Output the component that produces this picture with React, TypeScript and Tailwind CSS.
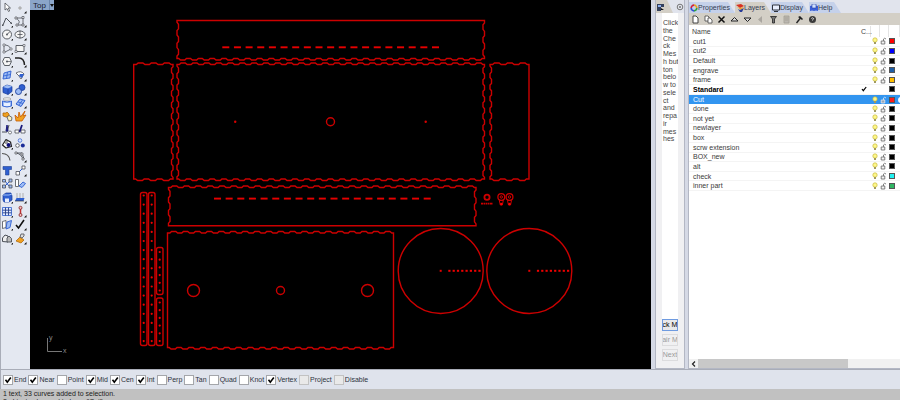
import type { ReactNode } from 'react';

type Layer = { name: string; color: string; current?: boolean; selected?: boolean };

const layers: Layer[] = [
  { name: 'cut1', color: '#ff0000' },
  { name: 'cut2', color: '#0000ff' },
  { name: 'Default', color: '#000000' },
  { name: 'engrave', color: '#1f5fa8' },
  { name: 'frame', color: '#ffbf00' },
  { name: 'Standard', color: '#000000', current: true },
  { name: 'Cut', color: '#ff1a1a', selected: true },
  { name: 'done', color: '#000000' },
  { name: 'not yet', color: '#000000' },
  { name: 'newlayer', color: '#000000' },
  { name: 'box', color: '#000000' },
  { name: 'scrw extension', color: '#000000' },
  { name: 'BOX_new', color: '#000000' },
  { name: 'alt', color: '#000000' },
  { name: 'check', color: '#21f0f0' },
  { name: 'inner part', color: '#2fb563' },
];

const snaps = [
  { label: 'End', on: true },
  { label: 'Near', on: true },
  { label: 'Point', on: false },
  { label: 'Mid', on: true },
  { label: 'Cen', on: true },
  { label: 'Int', on: true },
  { label: 'Perp', on: false },
  { label: 'Tan', on: false },
  { label: 'Quad', on: false },
  { label: 'Knot', on: false },
  { label: 'Vertex', on: true },
  { label: 'Project', on: false, muted: true },
  { label: 'Disable', on: false, muted: true },
];

const hint = ['Click', 'the', 'Che', 'ck', 'Mes', 'h but', 'ton', 'belo', 'w to', 'sele', 'ct', 'and', 'repa', 'ir', 'mes', 'hes'];

const G = '#4b4f57';
const B = '#2f5fd0';
const L = '#9dbcf5';
const O = '#f0a020';

// 13x13 glyphs, two per toolbar row
const tools: { name: string; more?: boolean; art: ReactNode }[] = [
  { name: 'Select', art: <path d="M4 2v7l2-1.500 1.500 3 1.200-.6-1.400-2.900H9.500z" fill="#fff" stroke={G} strokeWidth=".8" /> },
  { name: 'Point', more: true, art: <circle cx="6" cy="7" r="1.200" fill="#ddd" stroke="#888" strokeWidth=".7" /> },
  { name: 'Polyline', more: true, art: <><path d="M2 10 5 3l5 5" fill="none" stroke={G} /><path d="M1 9.500h1.500V11H1zM9.500 7.500H11V9H9.500z" fill={G} /></> },
  { name: 'Control point curve', more: true, art: <><path d="M2 3h7M9 3v7H3Q8 7 2 3" fill="none" stroke={G} strokeWidth=".8" /><path d="M1 2h2v2H1zM8 1.500h2v2H8zM8 9h2v2H8zM2 9h2v2H2z" fill="#fff" stroke={G} strokeWidth=".7" /></> },
  { name: 'Circle', more: true, art: <><circle cx="6" cy="6.500" r="4.500" fill="#f6f6f6" stroke={G} strokeWidth=".9" /><path d="m6 6.500 3-3" stroke={G} strokeWidth=".9" /><circle cx="6" cy="6.500" r=".9" fill={G} /></> },
  { name: 'Ellipse', more: true, art: <><ellipse cx="6" cy="6.500" rx="5" ry="3.500" fill="#f6f6f6" stroke={G} strokeWidth=".9" /><path d="M6 2.500v8M3.500 6.500h5" stroke={G} strokeWidth=".8" /></> },
  { name: 'Arc', more: true, art: <><path d="M3 2.500Q8.500 3 10 7M3 2.500v8L10 7" fill="none" stroke={G} strokeWidth=".8" /><path d="M2 2h2v2H2zM2 9h2v2H2zM9 6h2v2H9z" fill="#fff" stroke={G} strokeWidth=".6" /></> },
  { name: 'Rectangle', more: true, art: <><path d="M2 3.500h8v6H2z" fill="#f4f4f4" stroke={G} strokeWidth=".9" /><path d="M9 2.500h2v2H9zM1 8.500h2v2H1z" fill="#fff" stroke={G} strokeWidth=".6" /></> },
  { name: 'Polygon', more: true, art: <><path d="m3.500 2.500 5 0L10.500 6.500l-2 4h-5l-2-4z" fill="#f4f4f4" stroke={G} strokeWidth=".9" /><path d="M6 6.500h4" stroke={G} strokeWidth=".7" /><circle cx="6" cy="6.500" r="1" fill={G} /></> },
  { name: 'Fillet', more: true, art: <path d="M1 3h4q5 0 5.500 7" fill="none" stroke="#222" strokeWidth="1.500" /> },
  { name: 'Surface', more: true, art: <><path d="m3 4 7-2-1 7-7 1z" fill={L} stroke={B} strokeWidth=".9" /><path d="M6.500 3 5.500 9.500M2.500 7l7-1.500" stroke={B} strokeWidth=".8" /></> },
  { name: 'Sweep', more: true, art: <><path d="M2 4q5-3 8 1l-3 5-2-3z" fill="#fff" stroke={G} strokeWidth=".8" /><path d="m6 5 4 0-2 4-3-2z" fill={B} /></> },
  { name: 'Box', more: true, art: <><path d="m2 4 4-2 5 1.500v5L7 11.500 2 9.500z" fill={B} stroke="#173b9a" strokeWidth=".7" /><path d="m2 4 4-2 5 1.500L7 5.500z" fill={L} /><path d="M7 5.500v6" stroke="#173b9a" strokeWidth=".7" /></> },
  { name: 'Sphere', more: true, art: <><circle cx="8" cy="4.500" r="3" fill={B} stroke="#173b9a" strokeWidth=".8" /><circle cx="4.500" cy="8.500" r="3" fill={L} stroke="#173b9a" strokeWidth=".9" /></> },
  { name: 'Pipe', more: true, art: <><ellipse cx="6" cy="3" rx="4" ry="1.300" fill="#eee" stroke="#999" strokeWidth=".7" /><path d="M1.500 5q4.500 2 9 0v5q-4.500 2-9 0z" fill={L} stroke={B} strokeWidth=".9" /><path d="M3 7h6v3H3z" fill="#e8f0ff" /></> },
  { name: 'Plane', more: true, art: <><path d="m2 8 4-5 5 1.500-4 6z" fill={L} stroke={B} /><path d="m4 6 5 1.500M8.500 4 5 9" stroke={B} strokeWidth=".8" /></> },
  { name: 'Join', art: <><path d="M2 3h3l1-1 2 2v3H5L2 6z" fill={O} stroke="#a86000" strokeWidth=".7" /><path d="m6 7 2-1.500 3 2-.5 3L7.500 11z" fill="#fff0b8" stroke={G} strokeWidth=".8" /></> },
  { name: 'Explode', art: <path d="m2 11-1-6 3 3 1-6 1.500 5L11 1 9 6l3-1-4 6z" fill={O} stroke="#c85a00" strokeWidth=".8" /> },
  { name: 'Trim', art: <><path d="M1 9h5M8 2 6 9" stroke={G} /><path d="m6 2-1 6h2z" fill="#1a1a7a" stroke="#1a1a7a" /><circle cx="9" cy="9.500" r="1.500" fill="#fff" stroke={G} strokeWidth=".7" /></> },
  { name: 'Split', art: <><path d="M1 7h4v3H1zM7 7h4v3H7z" fill="#fff" stroke={G} strokeWidth=".8" /><path d="M8 2 5.500 9" stroke="#1a1a7a" strokeWidth="1.800" /></> },
  { name: 'Group', more: true, art: <><path d="M1.500 8 5 2.500 9.500 5l1 4.500L5 11z" fill="#fff" stroke="#222" strokeWidth="1.200" strokeLinejoin="round" /><circle cx="7.500" cy="8" r="2" fill="#10107a" /><circle cx="5" cy="5" r="1.300" fill="#fff" stroke="#222" strokeWidth=".7" /></> },
  { name: 'Ungroup', art: <><circle cx="6" cy="3.500" r="1.800" fill="#dce6ff" stroke={B} strokeWidth=".7" /><circle cx="3.500" cy="8.500" r="1.800" fill="#fff" stroke={G} strokeWidth=".8" /><circle cx="8.800" cy="8.500" r="2" fill="#1b2c98" /></> },
  { name: 'Curve edit', art: <path d="M1 3.500q7 0 8 7" fill="none" stroke="#555" strokeWidth="1.200" /> },
  { name: 'Control points', more: true, art: <><path d="M2 3q6 1 7 7M2 3l6 0 2 6" fill="none" stroke={G} strokeWidth=".9" /><path d="M1 2h2v2H1zM7 3h2v2H7zM8 8h2v2H8z" fill="#fff" stroke={G} strokeWidth=".7" /></> },
  { name: 'Text', art: <path d="M2 2.500h8.500v3h-2.500V11H4.500V5.500H2z" fill={B} stroke="#204090" strokeWidth=".6" /> },
  { name: 'Move', more: true, art: <><path d="m4 9 5-5" stroke={B} /><path d="M2 7.500h3.500V11H2zM8 2h3v3H8z" fill="#fff" stroke={G} strokeWidth=".8" /></> },
  { name: 'Array', art: <><path d="m4 4 4 5M4 9l5-5" stroke={B} /><path d="M1.500 2.500h3v2.500h-3zM8 2h3v3H8zM1.500 8h3v3h-3zM8 8h3v3H8z" fill={L} stroke={G} strokeWidth=".8" /></> },
  { name: 'Rotate', art: <><path d="M1.500 2.500h3v7h-3z" fill="#fff" stroke={G} strokeWidth=".8" /><path d="m5 9 4-4 2.500 1.500L8 10.500z" fill={L} stroke={B} strokeWidth=".9" /></> },
  { name: 'Boolean', more: true, art: <><path d="m2 4 3-2h5l1 3v4l-3 2H3L2 9z" fill={B} stroke="#173b9a" strokeWidth=".7" /><path d="M2 4h6l3-1" stroke={L} fill="none" /><path d="M4 7.500h4V11H4z" fill="#e6eeff" /></> },
  { name: 'Extrude', more: true, art: <><path d="M3 7V2M6 7V2M9 7V2" stroke="#aaa" strokeWidth=".9" /><path d="m1 10 1.500-3h8L9.500 10z" fill={B} /><path d="M1 10h9" stroke="#222" strokeWidth=".6" /></> },
  { name: 'Grid', more: true, art: <><path d="M1.500 2.500h9v8h-9z" fill="#dfe9ff" stroke={B} strokeWidth=".8" /><path d="M4.500 2.500v8M7.500 2.500v8M1.500 5.200h9M1.500 7.800h9" stroke="#27408a" strokeWidth=".9" /></> },
  { name: 'Dimension', more: true, art: <><path d="M6.500 3v7" stroke="#c03030" strokeWidth="1.500" /><circle cx="6.500" cy="2.800" r="1.500" fill="#f6c0c0" stroke="#802020" strokeWidth=".8" /><circle cx="6.500" cy="10" r="1.500" fill="#f6c0c0" stroke="#802020" strokeWidth=".8" /></> },
  { name: 'Unroll', more: true, art: <><path d="M1.500 3.500 5 2.500v7l-3.500 1z" fill="#fff" stroke={G} strokeWidth=".8" /><path d="m6 4 4.500-1.500L9 9.500 5 11z" fill={L} stroke={B} strokeWidth=".9" /></> },
  { name: 'Check', more: true, art: <path d="m2 7 2.500 3L10 2" fill="none" stroke="#111" strokeWidth="1.600" /> },
  { name: 'Mesh', more: true, art: <><path d="M1.500 9.500V6L4 3l3 1v6z" fill="#eee" stroke={G} /><path d="M6 10V6l2-2 2.500 2.500V10z" fill="#bbb" stroke={G} strokeWidth=".9" /></> },
  { name: 'Paint', more: true, art: <><path d="m6 5 4 3-3 3-5-2z" fill={O} stroke="#a86000" strokeWidth=".7" /><path d="m6 5 1-3h3v2L8 6z" fill="#ddd" stroke={G} strokeWidth=".8" /></> },
];

const TOOTH = 11.65;

// A run of shallow teeth along one edge, ending exactly on (x2, y2)
function wavy(x1: number, y1: number, x2: number, y2: number, nx: number, ny: number) {
  const length = Math.hypot(x2 - x1, y2 - y1);
  const count = Math.round(length / TOOTH);
  const ux = (x2 - x1) / count;
  const uy = (y2 - y1) / count;
  let d = '';
  for (let i = 0; i < count; i++) {
    const at = (t: number, k: number) => `L${(x1 + ux * (i + t) + nx * k).toFixed(2)} ${(y1 + uy * (i + t) + ny * k).toFixed(2)}`;
    d += at(0.2, 0) + at(0.34, 1) + at(0.7, 1) + at(0.86, 0);
  }
  return `${d}L${x2} ${y2}`;
}

type Sides = { t?: boolean; r?: boolean; b?: boolean; l?: boolean };

function panel(x1: number, y1: number, x2: number, y2: number, s: Sides) {
  const a = 1.5;
  return (
    `M${x1} ${y1}` +
    (s.t ? wavy(x1, y1, x2, y1, 0, -a) : `L${x2} ${y1}`) +
    (s.r ? wavy(x2, y1, x2, y2, -a, 0) : `L${x2} ${y2}`) +
    (s.b ? wavy(x2, y2, x1, y2, 0, a) : `L${x1} ${y2}`) +
    (s.l ? wavy(x1, y2, x1, y1, a, 0) : '') +
    'Z'
  );
}

const panels = [
  panel(177, 20.5, 484.5, 58.5, { r: true, b: true, l: true }),
  panel(177, 64.5, 484.5, 179, { t: true, r: true, b: true, l: true }),
  panel(133.7, 64.5, 173, 179, { t: true, r: true, b: true }),
  panel(490, 64.5, 529, 179, { t: true, b: true, l: true }),
  panel(168.5, 187.5, 476, 225.7, { t: true, r: true, l: true }),
  panel(167.5, 233, 393.5, 347.5, { t: true, b: true }),
];

const strips = [
  { x: 140.5, y: 192.5, h: 153, first: 195.5, step: 9.1, dots: 17 },
  { x: 148.5, y: 192.5, h: 153, first: 195.5, step: 9.1, dots: 17 },
  { x: 156.5, y: 247.5, h: 47, first: 252, step: 7.7, dots: 6 },
  { x: 156.5, y: 298, h: 47.5, first: 302.5, step: 7.7, dots: 6 },
];

const range = (n: number) => Array.from({ length: n }, (_, i) => i);

function Drawing() {
  return (
    <svg className="block" width="621" height="369" viewBox="30 0 621 369" fill="none" stroke="#cc0000" strokeWidth="1.400" role="img" aria-label="Top view">
      {panels.map((d) => (
        <path key={d} d={d} />
      ))}
      {range(19).map((i) => (
        <g key={i} stroke="#e60000" strokeWidth="1.900">
          <path d={`M${222.3 + i * TOOTH} 47.300h7`} />
          <path d={`M${214 + i * TOOTH} 198.600h7`} />
        </g>
      ))}
      <circle cx="330.500" cy="121.700" r="4" />
      <circle cx="235.200" cy="121.700" r="1.200" fill="#d80000" stroke="none" />
      <circle cx="425.700" cy="121.700" r="1.200" fill="#d80000" stroke="none" />
      <circle cx="193.500" cy="290.500" r="6" />
      <circle cx="280.500" cy="290.500" r="4" />
      <circle cx="367.500" cy="290.500" r="6" />
      {strips.map((s) => (
        <g key={`${s.x}-${s.y}`}>
          <rect x={s.x} y={s.y} width="6.500" height={s.h} rx="2" />
          {range(s.dots).map((i) => (
            <circle key={i} cx={s.x + 3.2} cy={s.first + i * s.step} r="1.100" fill="#f00000" stroke="none" />
          ))}
        </g>
      ))}
      {[440.7, 529.3].map((cx) => (
        <g key={cx}>
          <circle cx={cx} cy="271" r="42.500" />
          <path d={`M${cx - 1} 270.800h2`} stroke="#e60000" strokeWidth="2" />
          {range(8).map((i) => (
            <path key={i} d={`M${cx + 7.6 + i * 4.3} 270.800h2.200`} stroke="#f00000" strokeWidth="2" />
          ))}
        </g>
      ))}
      <circle cx="487" cy="197.300" r="2.600" strokeWidth="1.800" />
      <path d="M481 203.600h12" strokeWidth="1.600" strokeDasharray="2 .5 1.500 .5" />
      {[501.3, 509.5].map((cx) => (
        <g key={cx}>
          <circle cx={cx} cy="197" r="3.400" strokeWidth="1.300" />
          <circle cx={cx} cy="197" r="1.200" strokeWidth="1" />
          <path d={`M${cx - 2} 200.500 ${cx - 1} 205h2l1-4.500z`} strokeWidth="1" />
          <circle cx={cx} cy="204" r="1.200" fill="#ff0000" stroke="none" />
        </g>
      ))}
      <path d="M47.500 338v13.500H62" stroke="#777" strokeWidth="1" />
      <g fill="#8a8a8a" stroke="none" fontSize="7" fontFamily="Liberation Sans, sans-serif">
        <text x="49" y="340">y</text>
        <text x="63" y="353">x</text>
      </g>
    </svg>
  );
}

function ToolPalette() {
  return (
    <aside className="w-[30px] shrink-0 border-l border-[#a9adb8] bg-[#e4e8f1] pt-px">
      <div className="grid h-[244px] grid-cols-[12px_13px] grid-rows-[repeat(18,minmax(0,1fr))] gap-x-px">
        {tools.map((tool) => (
          <button key={tool.name} type="button" aria-label={tool.name} className="flex items-center justify-center overflow-hidden">
            <svg width="13" height="13" viewBox="0 0 13 13" fill="none" className="shrink-0">
              {tool.art}
              {tool.more && <path d="M12.500 10v2.500H10z" fill="#111" />}
            </svg>
          </button>
        ))}
      </div>
    </aside>
  );
}

function Viewport() {
  return (
    <main className="relative min-w-0 flex-1 overflow-hidden bg-black">
      <Drawing />
      <div className="absolute top-0 left-0 flex h-[10px] items-center bg-[#8ba5c9] text-[8px] leading-[9px] text-[#17202e]">
        <button type="button" className="px-[3px]">Top</button>
        <button type="button" aria-label="Viewport menu" className="flex h-full items-center border-l border-[#6c86ac]">
          <svg width="4" height="3" viewBox="0 0 4 3">
            <path d="M0 0h4L2 3z" fill="#111" />
          </svg>
        </button>
      </div>
    </main>
  );
}

function MeshPanel() {
  return (
    <aside className="flex w-[30px] shrink-0 flex-col border-x border-b border-[#b3b7c4] bg-[#f0f0f2]">
      <div className="flex h-[13px] items-center justify-between bg-[#e1e4ed]">
        <div className="flex h-full w-[17px] items-center bg-[#d3cfc6] pl-px [clip-path:polygon(0_0,65%_0,100%_100%,0_100%)]">
          <svg width="8" height="8" viewBox="0 0 8 8">
            <path d="M0 1h7v3H4v4H0z" fill="#34405c" />
            <path d="M1 2h3v2H1z" fill="#8fb0ee" />
            <path d="m4 5 3 2H4z" fill="#111" />
          </svg>
        </div>
        <button type="button" aria-label="Panel options">
          <svg width="8" height="8" viewBox="0 0 8 8" fill="none" stroke="#777">
            <circle cx="4" cy="4" r="2.800" />
            <circle cx="4" cy="4" r=".6" fill="#777" />
          </svg>
        </button>
      </div>
      <div className="mx-[6px] flex-1 overflow-hidden bg-white pt-[6px] pl-px">
        <p className="grid h-[124px] grid-rows-[repeat(16,minmax(0,1fr))] text-[7px] leading-[8px] whitespace-nowrap text-[#444]">
          {hint.map((line) => (
            <span key={line}>{line}</span>
          ))}
        </p>
      </div>
      <div className="mx-[6px] flex flex-col gap-[3px] pb-[7px] text-[7px] leading-[10px]">
        <button type="button" className="flex h-[12px] justify-center overflow-hidden border border-[#6f9be0] bg-[#e8e8ea] whitespace-nowrap text-black">ck M</button>
        <button type="button" disabled className="flex h-[12px] justify-center overflow-hidden border border-[#dcdcde] whitespace-nowrap text-[#999]">air M</button>
        <button type="button" disabled className="flex h-[12px] justify-center overflow-hidden border border-[#dcdcde] whitespace-nowrap text-[#999]">Next</button>
      </div>
    </aside>
  );
}

const tabs = [
  {
    name: 'Properties',
    width: 'w-[46px]',
    icon: (
      <g fill="none" strokeWidth="1.700">
        <path d="M4 1.200A2.800 2.800 0 0 1 6.800 4" stroke="#e8a020" />
        <path d="M6.800 4A2.800 2.800 0 0 1 4 6.800" stroke="#30a040" />
        <path d="M4 6.800A2.800 2.800 0 0 1 1.200 4" stroke="#3050d0" />
        <path d="M1.200 4A2.800 2.800 0 0 1 4 1.200" stroke="#d02040" />
      </g>
    ),
  },
  {
    name: 'Layers',
    width: 'w-[36px]',
    active: true,
    icon: (
      <>
        <path d="m0 1 5-1 3 2-4 2z" fill="#d83020" />
        <path d="m1 3 3 1 4-1-3 3z" fill="#f0a030" />
        <path d="m2 5 2 1 4-2-2 4H4z" fill="#283c98" />
      </>
    ),
  },
  {
    name: 'Display',
    width: 'w-[38px]',
    icon: (
      <>
        <path d="M.5 1h7v5h-7z" fill="#e8eefc" stroke="#30343c" />
        <path d="M2 7.500h4" stroke="#30343c" />
      </>
    ),
  },
  {
    name: 'Help',
    width: 'w-[32px]',
    icon: (
      <>
        <path d="M0 2q2-1 4 0 2-1 4 0v5q-2-1-4 0-2-1-4 0z" fill="#3a5fd8" />
        <path d="M2 0h4v4H2z" fill="#cfe0ff" stroke="#2840a0" strokeWidth=".6" />
      </>
    ),
  },
];

const actions = [
  { name: 'New layer', art: <path d="M2 1h3l2 2v5H2z" fill="#fff" stroke="#333" strokeWidth=".9" /> },
  { name: 'New sublayer', art: <><path d="M1 1h3l1 1v4H1z" fill="#fff" stroke="#444" strokeWidth=".8" /><path d="M4 3h2l2 2v3H4z" fill="#fff" stroke="#444" strokeWidth=".8" /></> },
  { name: 'Delete', art: <path d="m1.500 1.500 6 6m0-6-6 6" stroke="#111" strokeWidth="1.500" /> },
  { name: 'Move up', art: <path d="m1 6 3.500-3.500L8 6z" fill="#ddd" stroke="#222" /> },
  { name: 'Move down', art: <path d="m1 3 3.500 3.500L8 3z" fill="#ddd" stroke="#222" /> },
  { name: 'Move out', art: <path d="M6 1v7L2 4.500z" fill="#aaa6a0" /> },
  { name: 'Filter', art: <path d="M1.500 1.500h6L5.500 4v4h-2V4z" fill="#777" stroke="#222" strokeWidth=".8" /> },
  { name: 'Copy', art: <path d="M2 1h5v7H2zM3 3h3M3 5h3" fill="#bbb7b0" stroke="#a29e96" strokeWidth=".8" /> },
  { name: 'Tools', art: <><path d="m1.500 8 4-5" stroke="#222" strokeWidth="1.400" /><path d="m3 2 2-1 3 3-1 1z" fill="#222" /></> },
  { name: 'Help topics', art: <><circle cx="4.500" cy="4.500" r="3.500" fill="#3a3a3a" /><path d="M3.300 3.500q1.200-1.400 2.300 0 .2.700-1.100 1.300v.6" stroke="#fff" strokeWidth=".8" fill="none" /></> },
];

function LayerRow({ layer }: { layer: Layer }) {
  const tone = layer.selected
    ? 'bg-[#3295f0] text-white'
    : 'text-[#3a3a3a] border-b border-[#f4f4f4]';
  return (
    <tr className={`flex min-h-0 items-center ${tone}`}>
      <td className={`min-w-0 flex-1 pl-[4px] text-[7px] leading-[9px] whitespace-nowrap ${layer.current ? 'font-bold text-black' : ''}`}>
        {layer.name}
      </td>
      <td className="w-[10px]">
        {layer.current && (
          <svg width="6" height="6" viewBox="0 0 6 6" fill="none" aria-label="Current layer">
            <path d="m1 3 1.300 1.700L5.200 1" stroke="#000" strokeWidth="1.200" />
          </svg>
        )}
      </td>
      <td className="flex w-[8px] justify-center">
        {!layer.current && (
          <svg width="6" height="8" viewBox="0 0 6 8" aria-label="Visible">
            <circle cx="3" cy="3" r="2.200" fill="#fdf78a" stroke="#c9b93c" strokeWidth=".7" />
            <path d="M2 5h2v2H2z" fill="#a09a60" />
          </svg>
        )}
      </td>
      <td className="flex w-[9px] justify-center">
        {!layer.current && (
          <svg width="7" height="8" viewBox="0 0 7 8" fill="none" stroke={layer.selected ? '#e3e9f0' : '#666'} aria-label="Unlocked">
            <path d="M1.200 4h3.600v3H1.200z" fill={layer.selected ? '#9aa5b4' : '#f2f2f2'} strokeWidth=".8" />
            <path d="M3.500 4V2q1-1.500 2.500 0" strokeWidth=".8" />
          </svg>
        )}
      </td>
      <td className="flex w-[8px] justify-center">
        <span className="block size-[6px] border border-[#555]" style={{ backgroundColor: layer.color }} />
      </td>
      <td className="flex h-full w-[4px] items-center overflow-hidden pl-[2px]">
        {layer.selected && <span className="block size-[6px] shrink-0 rounded-full bg-white" />}
      </td>
    </tr>
  );
}

function LayersPanel() {
  return (
    <section className="flex w-[212px] shrink-0 flex-col border-b border-l border-[#b3b7c4] bg-white">
      <div role="tablist" className="flex h-[13px] items-end bg-[#e1e4ed] text-[7px] leading-[11px] text-[#333c52]">
        {tabs.map((tab) => (
          <button
            key={tab.name}
            type="button"
            role="tab"
            aria-selected={!!tab.active}
            className={`flex h-[11px] items-center pl-px [clip-path:polygon(0_0,calc(100%-7px)_0,100%_100%,0_100%)] ${tab.width} ${tab.active ? 'bg-[#d3cfc6]' : 'bg-[#c5d1ea]'}`}
          >
            <svg width="8" height="8" viewBox="0 0 8 8" fill="none" className="shrink-0">
              {tab.icon}
            </svg>
            {tab.name}
          </button>
        ))}
      </div>
      <div className="flex h-[12px] items-center gap-[4px] bg-[#d3cfc6] pl-[2px]">
        {actions.map((action) => (
          <button key={action.name} type="button" aria-label={action.name}>
            <svg width="9" height="9" viewBox="0 0 9 9" fill="none">
              {action.art}
            </svg>
          </button>
        ))}
      </div>
      <table className="flex flex-col">
        <thead className="block">
          <tr className="flex h-[12px] items-center text-[7px] leading-[11px] text-[#444]">
            <th className="flex-1 pl-[3px] text-left font-normal">Name</th>
            <th className="w-[10px] border-r border-[#e4e4e4] text-left font-normal">C...</th>
            <th className="h-full w-[9px] border-r border-[#e4e4e4]" aria-label="On" />
            <th className="h-full w-[9px] border-r border-[#e4e4e4]" aria-label="Lock" />
            <th className="h-full w-[11px] border-r border-[#e4e4e4]" aria-label="Color" />
          </tr>
        </thead>
        <tbody className="grid h-[154px] grid-rows-[repeat(16,minmax(0,1fr))]">
          {layers.map((layer) => (
            <LayerRow key={layer.name} layer={layer} />
          ))}
        </tbody>
      </table>
      <div className="flex-1" />
      <div className="flex h-[9px] bg-[#f1f1f1]">
        <button type="button" aria-label="Scroll left" className="flex w-[9px] items-center justify-center">
          <svg width="5" height="6" viewBox="0 0 5 6" fill="none">
            <path d="M4 .5 1.500 3 4 5.500" stroke="#222" strokeWidth="1.200" />
          </svg>
        </button>
        <div className="w-[150px] bg-[#c8c8c8]" />
      </div>
    </section>
  );
}

function SnapBar() {
  return (
    <div className="flex h-[20px] shrink-0 items-center gap-[2px] border-t border-l border-[#a9adb8] bg-[#dfe3ec] pl-[2px] text-[7px] leading-[10px] text-[#2e3340]">
      {snaps.map((snap) => (
        <label key={snap.label} className="flex items-center gap-px">
          <span className="grid">
            <input
              type="checkbox"
              defaultChecked={snap.on}
              className={`peer col-start-1 row-start-1 size-[10px] appearance-none border ${snap.muted ? 'border-[#c2c2c2] bg-[#e9e9e9]' : 'border-[#a4a6aa] bg-white'}`}
            />
            <svg className="pointer-events-none invisible col-start-1 row-start-1 peer-checked:visible" width="10" height="10" viewBox="0 0 10 10" fill="none">
              <path d="m2.500 4.800 1.800 2.400L7.800 2.500" stroke="#000" strokeWidth="1.600" />
            </svg>
          </span>
          {snap.label}
        </label>
      ))}
    </div>
  );
}

export default function App() {
  return (
    <div className="flex h-screen flex-col overflow-hidden bg-[#dfe3ec] font-['Liberation_Sans',Arial,sans-serif]">
      <div className="flex min-h-0 flex-1">
        <ToolPalette />
        <Viewport />
        <div className="w-[4px] shrink-0 bg-[#d5d9e5]" />
        <MeshPanel />
        <div className="w-[3px] shrink-0 bg-[#d5d9e5]" />
        <LayersPanel />
      </div>
      <SnapBar />
      <footer className="h-[11px] shrink-0 overflow-hidden bg-[#c1c1c1] pt-px pl-[3px] text-[7px] leading-[8px] text-[#222]">
        <p>1 text, 33 curves added to selection.</p>
        <p>2 objects changed to layer "Cut".</p>
      </footer>
    </div>
  );
}
